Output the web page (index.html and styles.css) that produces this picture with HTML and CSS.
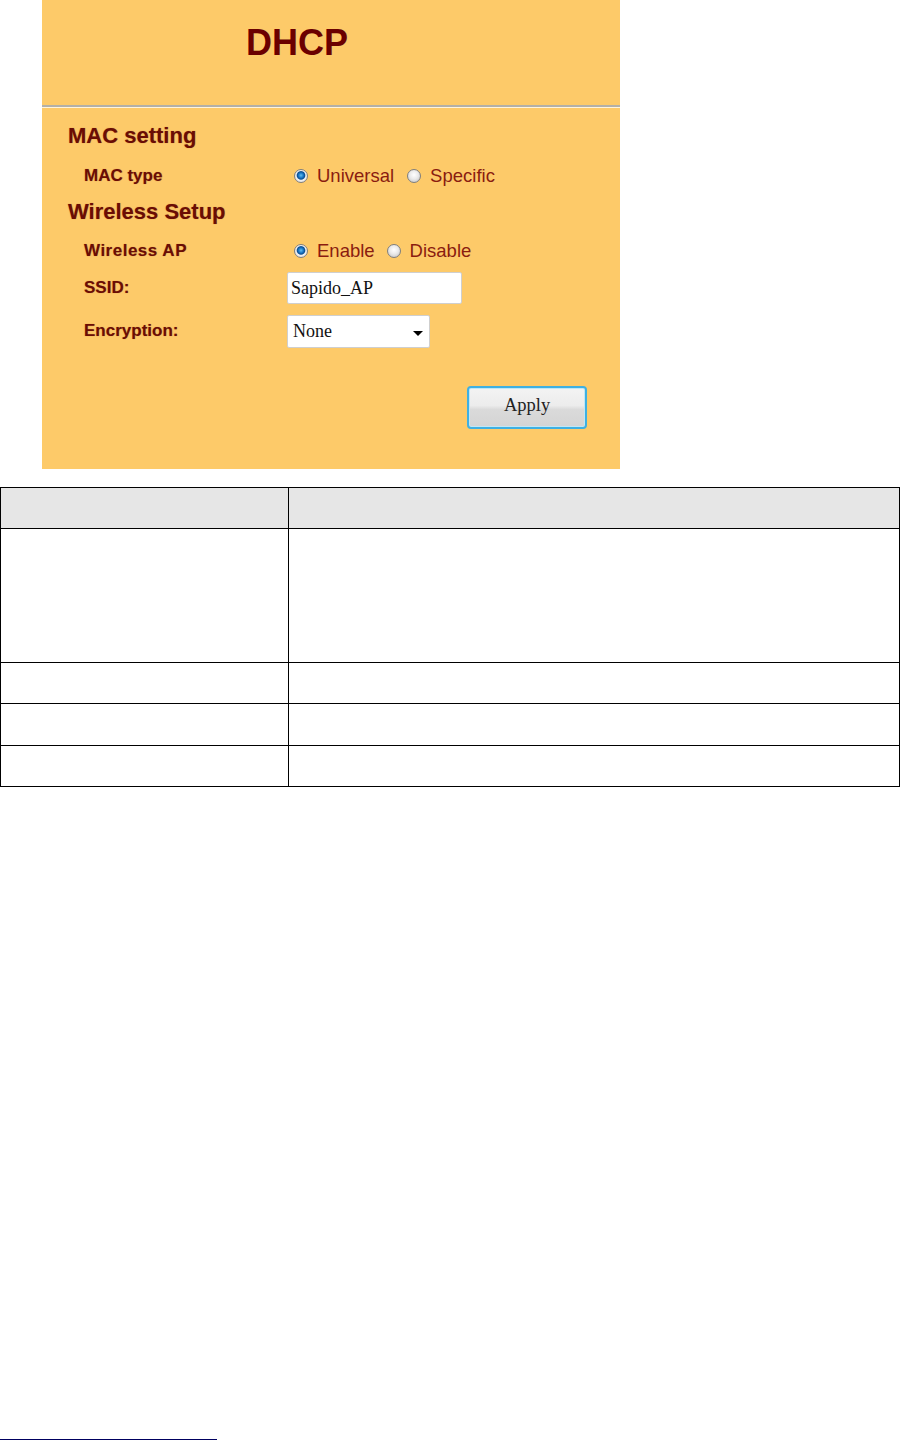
FILE: index.html
```html
<!DOCTYPE html>
<html lang="en">
<head>
	<meta charset="UTF-8">
	<title>DHCP</title>
	<link rel="stylesheet" href="styles.css">
</head>
<body>

	<div class="shot">
		<div class="shot-head">
			<h1 class="title">DHCP</h1>
		</div>
		<div class="shot-body">
			<h2 class="section sec-mac">MAC setting</h2>
			<div class="row row-mac">
				<span class="label">MAC type</span>
				<span class="value">
					<span class="opt"><span class="radio on"></span>Universal</span>
					<span class="opt"><span class="radio"></span>Specific</span>
				</span>
			</div>

			<h2 class="section sec-wl">Wireless Setup</h2>
			<div class="row row-ap">
				<span class="label">Wireless AP</span>
				<span class="value">
					<span class="opt"><span class="radio on"></span>Enable</span>
					<span class="opt"><span class="radio"></span>Disable</span>
				</span>
			</div>
			<div class="row row-ssid">
				<span class="label">SSID:</span>
				<span class="value"><input type="text" class="field" value="Sapido_AP"></span>
			</div>
			<div class="row row-enc">
				<span class="label">Encryption:</span>
				<span class="value">
					<span class="select"><span>None</span><span class="caret"></span></span>
				</span>
			</div>

			<div class="actions">
				<button type="button" class="apply">Apply</button>
			</div>
		</div>
	</div>

	<table class="desc">
		<tr class="head"><td class="c1"></td><td></td></tr>
		<tr class="tall"><td class="c1"></td><td></td></tr>
		<tr><td class="c1"></td><td></td></tr>
		<tr class="r42"><td class="c1"></td><td></td></tr>
		<tr><td class="c1"></td><td></td></tr>
	</table>

	<div class="footnote-rule"></div>

</body>
</html>
```

FILE: styles.css
```css
*{margin: 0;padding: 0;}
body{
	font-family: "Liberation Sans", Arial, sans-serif;
	background: #fff;
}

/* 截图面板 */
.shot{
	width: 578px;
	height: 469px;
	margin-left: 42px;
	background: #fdca69;
}
.shot-head{
	height: 107px;
	box-sizing: border-box;
	border-bottom: 2px solid #b3b0a8;
}
.title{
	padding-top: 25px;
	padding-left: 204px;
	font-size: 36px;
	line-height: 36px;
	font-weight: bold;
	color: #6b0000;
}
.shot-body{
	border-top: 1px solid #fff4dc;
	padding-top: 12px;
}
.section{
	height: 32px;
	display: flex;
	align-items: center;
	padding-left: 26px;
	font-size: 22px;
	font-weight: bold;
	color: #6a0d04;
	text-shadow: 0 0 1px rgba(110,10,0,.45);
}
.row{
	display: grid;
	grid-template-columns: 203px 1fr;
	align-items: center;
	padding-left: 42px;
	box-sizing: border-box;
}
.row-mac{height: 44px; padding-top: 4px;}
.row-ap{height: 42px; padding-top: 3px;}
.row-ssid{height: 34px; padding-top: 2px;}
.row-enc{height: 54px;}
.label{
	font-size: 17px;
	font-weight: bold;
	color: #6a0d04;
	text-shadow: 0 0 1px rgba(110,10,0,.4);
}
.row-ap .label{letter-spacing: .5px;}
.value{
	display: flex;
	align-items: center;
}
.opt{
	display: inline-flex;
	align-items: center;
	gap: 9px;
	margin-right: 13px;
	font-size: 18.5px;
	color: #8a1c10;
}
.opt:first-child{margin-left: 7px;}
.row-ap .opt{margin-right: 12px;}
.radio{
	width: 14px;
	height: 14px;
	box-sizing: border-box;
	border-radius: 50%;
	border: 1px solid #7f7f7f;
	background: radial-gradient(circle at 50% 40%, #ffffff 0, #eaeaea 45%, #bdbdbd 100%);
}
.radio.on{
	background: radial-gradient(circle at 50% 45%, #62bff2 0, #1b78c6 2.4px, #0a4d92 3.8px, #f1f1f1 4.8px, #d2d2d2 100%);
}
.field{
	width: 175px;
	height: 32px;
	box-sizing: border-box;
	border: 1px solid #cfcfcf;
	border-radius: 2px;
	padding: 0 3px;
	background: #fff;
	font-family: "Liberation Serif", "Times New Roman", serif;
	font-size: 18px;
	color: #111;
	outline: none;
}
.select{
	width: 143px;
	height: 33px;
	box-sizing: border-box;
	display: flex;
	align-items: center;
	justify-content: space-between;
	padding: 0 6px 0 5px;
	border: 1px solid #cfcfcf;
	border-radius: 2px;
	background: #fff;
	font-family: "Liberation Serif", "Times New Roman", serif;
	font-size: 18px;
	color: #111;
}
.caret{
	width: 0;
	height: 0;
	margin-top: 4px;
	border-left: 5px solid transparent;
	border-right: 5px solid transparent;
	border-top: 5px solid #000;
}
.actions{
	display: flex;
	justify-content: flex-end;
	padding-right: 33px;
	margin-top: 28px;
}
.apply{
	width: 120px;
	height: 43px;
	box-sizing: border-box;
	padding-bottom: 4px;
	border: 2px solid #3fb0e2;
	border-radius: 4px;
	box-shadow: inset 0 0 0 1px #bfe7f8;
	background: linear-gradient(#f3f3f3 0, #ececec 45%, #dadada 55%, #d4d4d4 100%);
	font-family: "Liberation Serif", "Times New Roman", serif;
	font-size: 18.5px;
	color: #222;
	cursor: pointer;
}

/* 说明表格 */
.desc{
	width: 900px;
	margin-top: 18px;
	border-collapse: separate;
	border-spacing: 0;
	border-top: 1px solid #000;
	border-left: 1px solid #000;
}
.desc td{
	height: 40px;
	border-right: 1px solid #000;
	border-bottom: 1px solid #000;
}
.desc .c1{width: 287px;}
.desc .head td{background: #e6e6e6;}
.desc .tall td{height: 133px;}
.desc .r42 td{height: 41px;}

.footnote-rule{
	width: 217px;
	height: 1px;
	margin-top: 652px;
	background: #000060;
}
```
